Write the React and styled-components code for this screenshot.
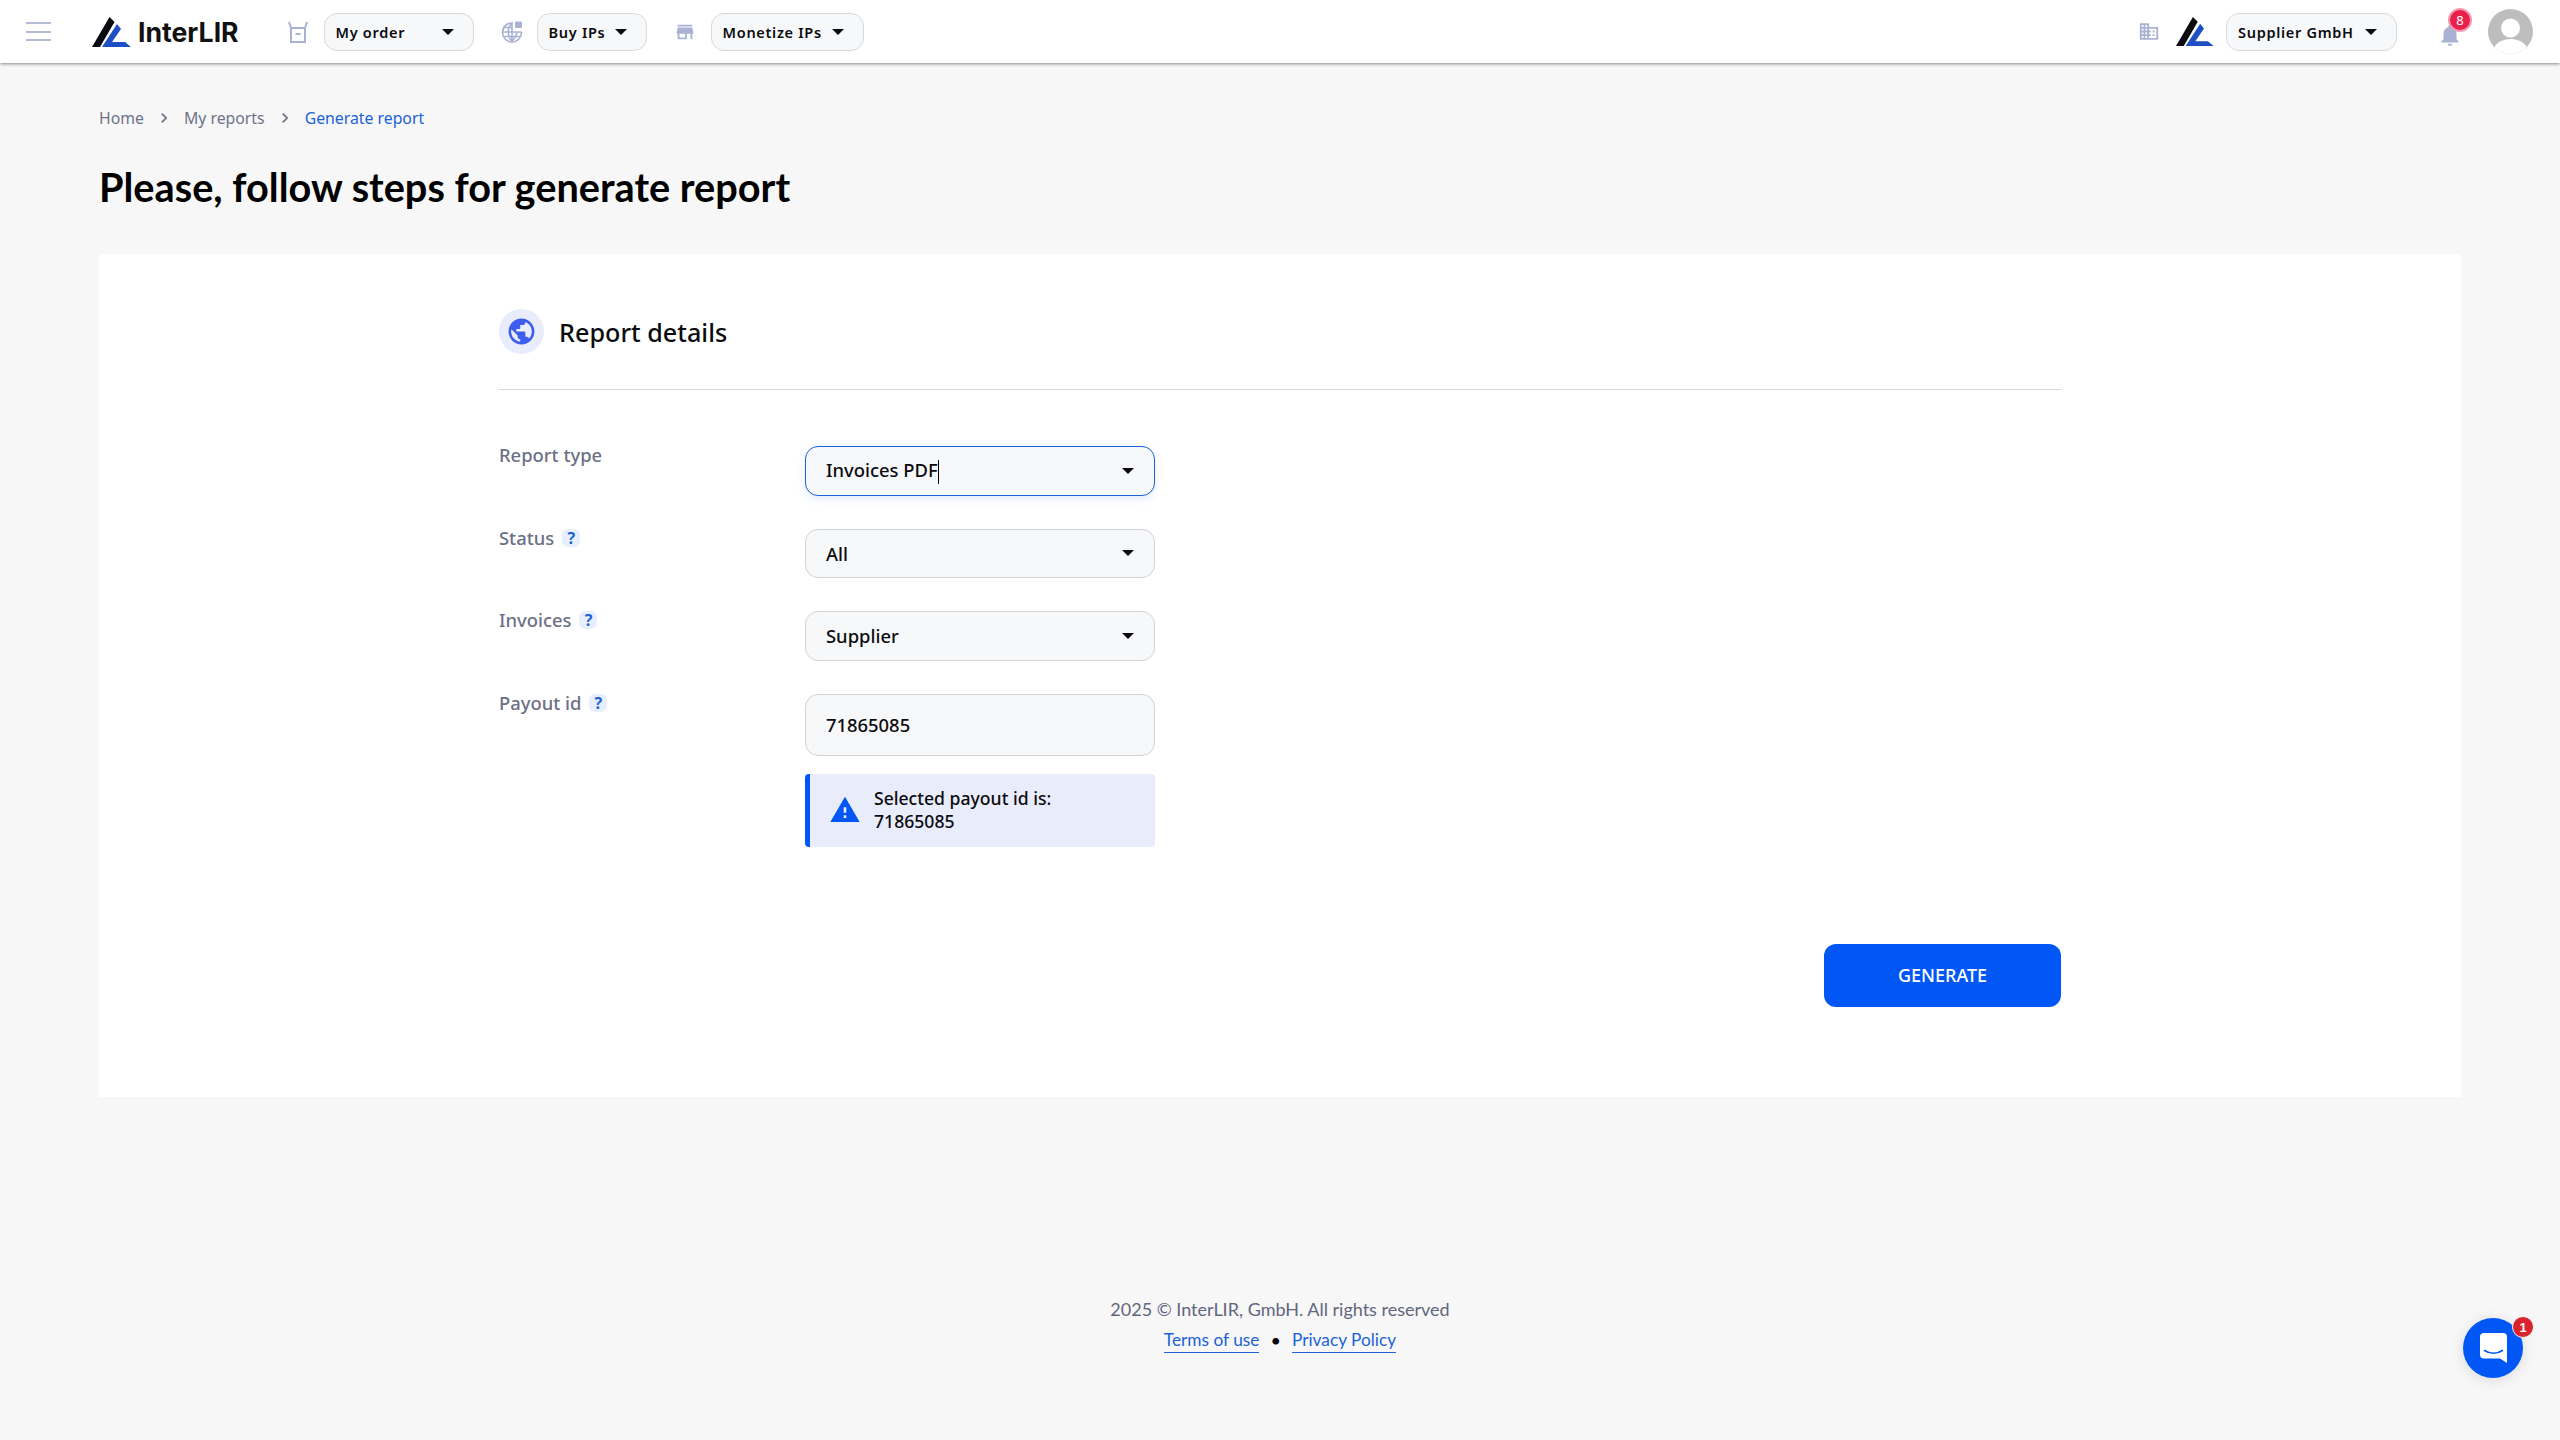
import React from "react";
import styled, { createGlobalStyle } from "styled-components";
import {
  MdChevronRight,
  MdDomain,
  MdNotifications,
  MdPublic,
  MdStore,
  MdWarning,
} from "react-icons/md";

const GlobalStyle = createGlobalStyle`
  html, body {
    margin: 0;
    padding: 0;
    background: #f7f7f8;
    font-family: "Noto Sans", sans-serif;
    color: #0b0b0f;
  }
  * { box-sizing: border-box; }
`;

const Page = styled.div`
  min-height: 100vh;
  display: flex;
  flex-direction: column;
`;

const Header = styled.header`
  height: 63px;
  background: #fff;
  box-shadow: 0 1px 3px rgba(0, 0, 0, 0.45);
  display: flex;
  align-items: center;
  padding: 0 27px 0 26px;
`;
const Burger = styled.div`
  width: 25px;
  height: 19px;
  margin-right: 41px;
  display: flex;
  flex-direction: column;
  justify-content: space-between;
  span {
    height: 2px;
    background: #b4bcd6;
  }
`;
const LogoMark = styled.svg`
  display: block;
  flex: none;
`;
const LogoText = styled.span`
  font-family: "Inter", sans-serif;
  font-weight: 700;
  font-size: 26.6px;
  margin: 0 48px 0 7px;
  color: #111;
`;
const NavGroup = styled.div`
  display: flex;
  align-items: center;
  margin-right: 27px;
`;
const NavIcon = styled.span`
  display: flex;
  align-items: center;
  justify-content: center;
  width: 22px;
  height: 22px;
  margin-right: ${(p) => p.$gap || 16}px;
  color: #a9b2d2;
`;
const NavButton = styled.div`
  width: ${(p) => p.$w}px;
  height: 38px;
  padding: 0 19px 0 11px;
  margin-left: ${(p) => p.$left || 0}px;
  border: 1px solid #d8d9dc;
  border-radius: 13px;
  background: #f7f8fa;
  display: flex;
  align-items: center;
  justify-content: space-between;
  font-size: 14.5px;
  font-weight: 600;
  letter-spacing: 0.7px;
`;
const Caret = styled.i`
  width: 0;
  height: 0;
  flex: none;
  border-left: 6px solid transparent;
  border-right: 6px solid transparent;
  border-top: 6.5px solid #0b0b0f;
`;
const Spacer = styled.div`
  flex: 1;
`;
const BellWrap = styled.div`
  position: relative;
  width: 26px;
  height: 26px;
  margin: 6px 25px 0 40px;
  color: #a9b2d2;
`;
const BellBadge = styled.span`
  position: absolute;
  top: -14px;
  left: 11px;
  width: 24px;
  height: 24px;
  border-radius: 50%;
  background: #e8204e;
  border: 2px solid #f29ab0;
  color: #fff;
  font-size: 13px;
  display: flex;
  align-items: center;
  justify-content: center;
`;

const Main = styled.main`
  padding: 44px 99px 0;
`;
const Crumbs = styled.nav`
  height: 22px;
  display: flex;
  align-items: center;
  font-size: 15.8px;
  color: #6e7389;
`;
const CrumbSep = styled.span`
  display: flex;
  width: 40px;
  justify-content: center;
  color: #6e7389;
`;
const CrumbCurrent = styled.span`
  color: #1a62d6;
`;
const Title = styled.h1`
  margin: 33px 0 42px;
  height: 50px;
  line-height: 50px;
  font-family: "Lato", sans-serif;
  font-size: 39.7px;
  font-weight: 700;
  color: #000;
`;
const Card = styled.section`
  background: #fff;
  padding: 55px 400px 90px;
`;
const CardHead = styled.div`
  display: flex;
  align-items: center;
  gap: 15px;
  padding-bottom: 35px;
  border-bottom: 1px solid #d6d6d8;
  margin-bottom: 56px;
`;
const HeadIcon = styled.span`
  width: 45px;
  height: 45px;
  border-radius: 50%;
  background: #e8ecfb;
  color: #3d5cf0;
  display: flex;
  align-items: center;
  justify-content: center;
`;
const HeadText = styled.h2`
  margin: 0;
  font-size: 25.2px;
  font-weight: 500;
  color: #0b0b0f;
`;
const Form = styled.div`
  display: grid;
  grid-template-columns: 306px 350px;
  row-gap: 33px;
`;
const Label = styled.div`
  display: flex;
  align-items: flex-start;
  gap: 8px;
  font-size: 18.4px;
  font-weight: 500;
  line-height: 18px;
  color: #6b7086;
`;
const Hint = styled.span`
  width: 18px;
  height: 18px;
  border-radius: 6px;
  background: #e8effc;
  color: #1a62d6;
  font-size: 16px;
  font-weight: 700;
  display: flex;
  align-items: center;
  justify-content: center;
`;
const Field = styled.div`
  height: ${(p) => p.$h || 49.5}px;
  padding: 0 20px;
  border: ${(p) => (p.$focus ? "1.5px solid #1a62d6" : "1px solid #d2d3d6")};
  border-radius: 13px;
  background: #f7f8fa;
  box-shadow: ${(p) =>
    p.$focus ? "0 3px 8px rgba(26, 98, 214, 0.12)" : "none"};
  display: flex;
  align-items: center;
  justify-content: space-between;
  font-size: 18.4px;
  font-weight: 500;
`;
const TextCaret = styled.span`
  display: inline-block;
  width: 1px;
  height: 24px;
  background: #000;
  vertical-align: middle;
`;
const Alert = styled.div`
  grid-column: 2;
  height: 73px;
  margin-top: -15px;
  padding-left: 19px;
  background: #e8ecfb;
  border-left: 5px solid #0057f5;
  border-radius: 4px;
  display: flex;
  align-items: center;
  gap: 13px;
  font-size: 17.6px;
  font-weight: 500;
  line-height: 23px;
  color: #0b0b0f;
`;
const AlertIcon = styled.span`
  display: flex;
  color: #0057f5;
`;
const Actions = styled.div`
  display: flex;
  justify-content: flex-end;
  margin-top: 97px;
`;
const Generate = styled.button`
  width: 237px;
  height: 63px;
  border: 0;
  border-radius: 12px;
  background: #0057f5;
  color: #fff;
  font-family: inherit;
  font-size: 18px;
  font-weight: 500;
`;
const Footer = styled.footer`
  margin-top: 200px;
  text-align: center;
  font-family: "Lato", sans-serif;
  font-size: 18px;
  line-height: 24px;
  color: #62667c;
`;
const FooterLinks = styled.div`
  margin-top: 6px;
  display: flex;
  justify-content: center;
  align-items: center;
  gap: 11px;
  color: #000;
`;
const FooterLink = styled.a`
  color: #1a62d6;
  border-bottom: 1.5px solid #1a62d6;
  font-size: 17.3px;
  line-height: 25px;
`;
const Chat = styled.div`
  position: fixed;
  left: 2463px;
  top: 1318px;
  width: 60px;
  height: 60px;
  border-radius: 50%;
  background: #0057f5;
  box-shadow: 0 2px 14px rgba(0, 0, 0, 0.12);
  display: flex;
  align-items: center;
  justify-content: center;
`;
const ChatBadge = styled.span`
  position: absolute;
  top: -2px;
  right: -11px;
  width: 22px;
  height: 22px;
  border-radius: 50%;
  background: #d9232e;
  border: 1.5px solid #f7f7f8;
  color: #fff;
  font-family: "Liberation Sans", sans-serif;
  font-size: 13px;
  font-weight: 700;
  display: flex;
  align-items: center;
  justify-content: center;
`;
const Avatar = styled.svg`
  display: block;
  flex: none;
`;

const Logo = ({ height }) => (
  <LogoMark height={height} width={(height * 39) / 30} viewBox="0 0 39 30">
    <path d="M0 30 L17.5 0 L22.5 5 L8 30 Z" fill="#0b0b0f" />
    <path d="M10 30 L25 7 L29 12 L20 25 L33 25 L39 30 Z" fill="#1f4fc4" />
  </LogoMark>
);

const OrderIcon = () => (
  <svg width="20" height="22" viewBox="0 0 20 22" fill="none" stroke="#a9b2d2" strokeWidth="2">
    <path d="M1 1 L3 7 H17 L19 1" />
    <path d="M3 7 V21 H17 V7" />
    <path d="M7.5 13 H12.5" />
  </svg>
);

const GlobeIcon = () => (
  <svg width="22" height="22" viewBox="0 0 22 22" fill="none" stroke="#a9b2d2" strokeWidth="1.6">
    <path d="M12 2 A9.5 9.5 0 1 0 20.5 11" />
    <path d="M1.5 11 H20.5 M2.5 6.5 H11 M2.5 15.5 H19.5" />
    <path d="M11 2 C6 7 6 15 11 20.5 C15 15 16 13 16 11 M11 2 V20.5" />
    <rect x="14" y="0.5" width="7" height="6.5" rx="1" fill="#a9b2d2" stroke="none" />
  </svg>
);

const ChatIcon = () => (
  <svg width="27" height="30" viewBox="0 0 27 30">
    <path
      d="M4 0 H23 A4 4 0 0 1 27 4 V30 L20 25.5 H4 A4 4 0 0 1 0 21.5 V4 A4 4 0 0 1 4 0 Z"
      fill="#fff"
    />
    <path
      d="M4.5 17.5 C10 21 17 21 22.5 17.5"
      fill="none"
      stroke="#0057f5"
      strokeWidth="1.6"
      strokeLinecap="round"
    />
  </svg>
);

const Row = ({ label, hint, children }) => (
  <>
    <Label>
      {label}
      {hint && <Hint>?</Hint>}
    </Label>
    {children}
  </>
);

export default function App() {
  return (
    <Page>
      <GlobalStyle />
      <Header>
        <Burger>
          <span />
          <span />
          <span />
        </Burger>
        <Logo height={30} />
        <LogoText>InterLIR</LogoText>
        <NavGroup>
          <NavIcon $gap={15}>
            <OrderIcon />
          </NavIcon>
          <NavButton $w={150}>
            My order
            <Caret />
          </NavButton>
        </NavGroup>
        <NavGroup>
          <NavIcon $gap={14}>
            <GlobeIcon />
          </NavIcon>
          <NavButton $w={110}>
            Buy IPs
            <Caret />
          </NavButton>
        </NavGroup>
        <NavGroup>
          <NavIcon $gap={15}>
            <MdStore size={26} />
          </NavIcon>
          <NavButton $w={153}>
            Monetize IPs
            <Caret />
          </NavButton>
        </NavGroup>
        <Spacer />
        <NavIcon $gap={16}>
          <MdDomain size={25} />
        </NavIcon>
        <Logo height={29} />
        <NavButton $w={171} $left={12}>
          Supplier GmbH
          <Caret />
        </NavButton>
        <BellWrap>
          <MdNotifications size={26} />
          <BellBadge>8</BellBadge>
        </BellWrap>
        <Avatar width="45" height="45" viewBox="0 0 45 45">
          <defs>
            <clipPath id="avatar-clip">
              <circle cx="22.5" cy="22.5" r="22.5" />
            </clipPath>
          </defs>
          <circle cx="22.5" cy="22.5" r="22.5" fill="#bdbdbd" />
          <g clipPath="url(#avatar-clip)" fill="#fff">
            <circle cx="22.5" cy="19" r="9.5" />
            <ellipse cx="22.5" cy="42" rx="17" ry="12" />
          </g>
        </Avatar>
      </Header>
      <Main>
        <Crumbs>
          <span>Home</span>
          <CrumbSep>
            <MdChevronRight size={20} />
          </CrumbSep>
          <span>My reports</span>
          <CrumbSep>
            <MdChevronRight size={20} />
          </CrumbSep>
          <CrumbCurrent>Generate report</CrumbCurrent>
        </Crumbs>
        <Title>Please, follow steps for generate report</Title>
        <Card>
          <CardHead>
            <HeadIcon>
              <MdPublic size={31} />
            </HeadIcon>
            <HeadText>Report details</HeadText>
          </CardHead>
          <Form>
            <Row label="Report type">
              <Field $focus>
                <span>
                  Invoices PDF
                  <TextCaret />
                </span>
                <Caret />
              </Field>
            </Row>
            <Row label="Status" hint>
              <Field>
                All
                <Caret />
              </Field>
            </Row>
            <Row label="Invoices" hint>
              <Field>
                Supplier
                <Caret />
              </Field>
            </Row>
            <Row label="Payout id" hint>
              <Field $h={62}>71865085</Field>
            </Row>
            <Alert>
              <AlertIcon>
                <MdWarning size={32} />
              </AlertIcon>
              <span>
                Selected payout id is:
                <br />
                71865085
              </span>
            </Alert>
          </Form>
          <Actions>
            <Generate>GENERATE</Generate>
          </Actions>
        </Card>
        <Footer>
          <div>2025 © InterLIR, GmbH. All rights reserved</div>
          <FooterLinks>
            <FooterLink>Terms of use</FooterLink>
            <span>•</span>
            <FooterLink>Privacy Policy</FooterLink>
          </FooterLinks>
        </Footer>
      </Main>
      <Chat>
        <ChatIcon />
        <ChatBadge>1</ChatBadge>
      </Chat>
    </Page>
  );
}
